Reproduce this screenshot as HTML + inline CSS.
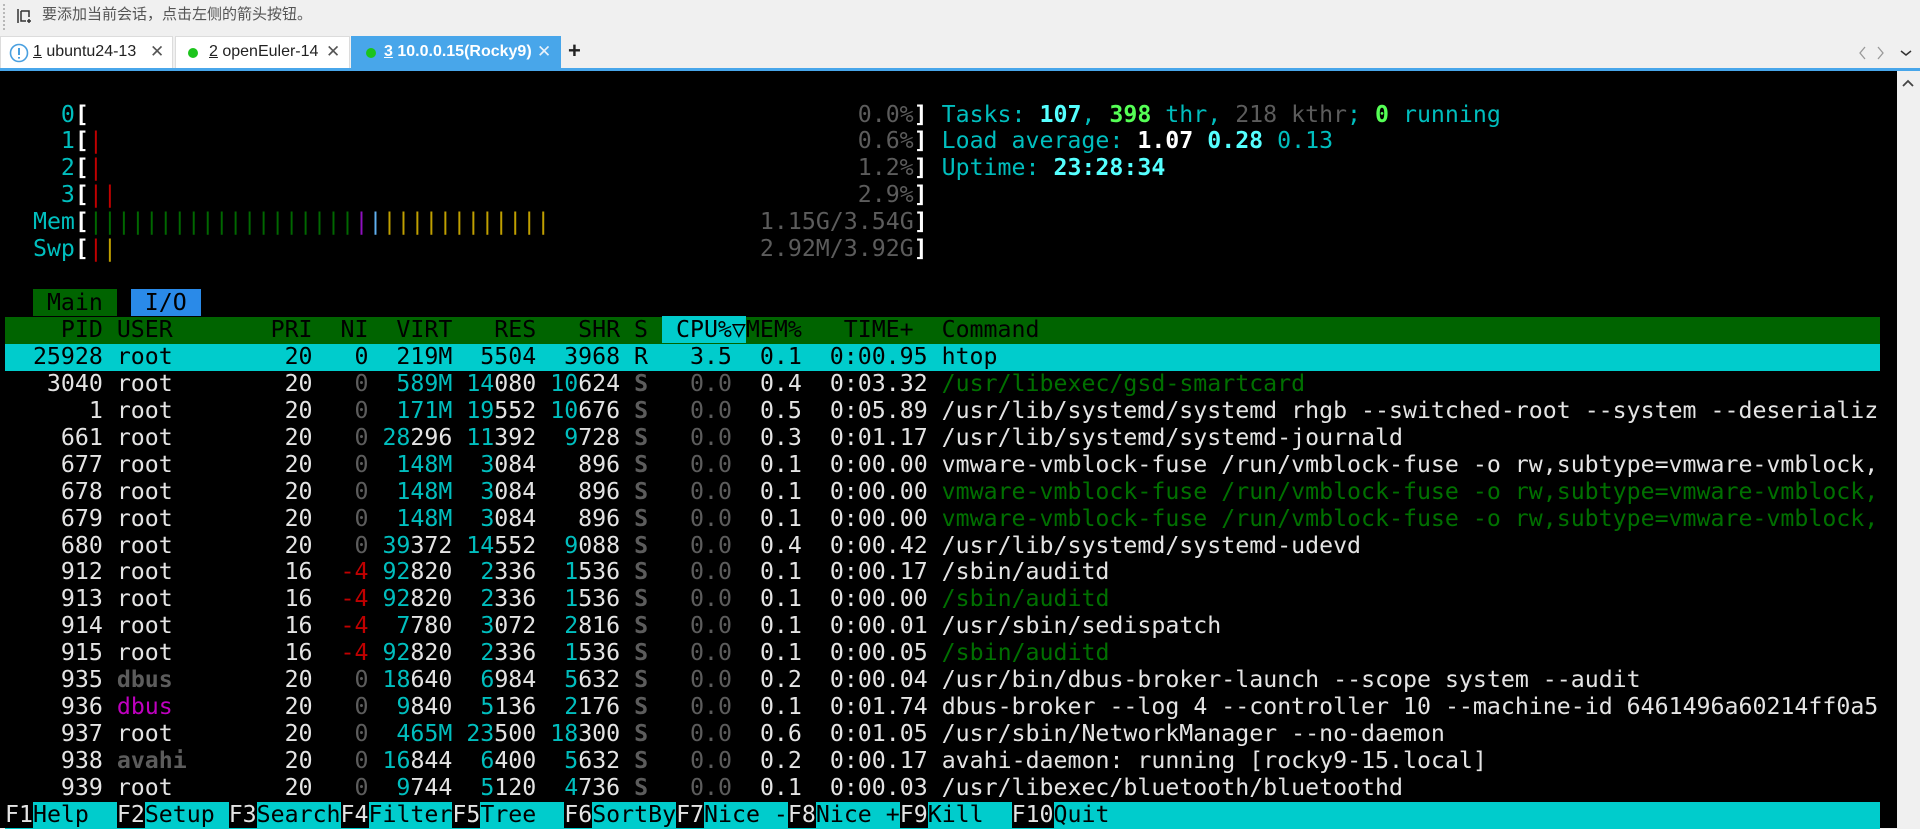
<!DOCTYPE html>
<html><head><meta charset="utf-8"><style>
*{margin:0;padding:0;box-sizing:border-box}
body{width:1920px;height:828px;overflow:hidden;background:#f0f0f0;position:relative;font-family:"Liberation Sans","Noto Sans CJK SC",sans-serif}
.tb{position:absolute;left:0;top:0;width:1920px;height:35px;background:#f0f0f0}
.tip{position:absolute;left:42px;top:5px;font-size:15px;color:#555;line-height:20px}
.grip{position:absolute;left:3px;top:4px;height:26px;border-left:2px dotted #b8b8b8}
.tab{position:absolute;top:36px;height:32px;background:#fff;border:1px solid #dcdcdc;border-bottom:none;font-size:16px;line-height:30px;color:#222}
.tab .x{position:absolute;top:0;font-size:17px;color:#555}
.tab.act{background:#48a6ea;border-color:#48a6ea;color:#fff;font-weight:bold}
.dot{position:absolute;top:11px;width:10px;height:10px;border-radius:50%;background:#1cc41c}
u{text-decoration:underline}
.line{position:absolute;left:0;top:68px;width:1920px;height:3px;background:#48a6ea}
.term{position:absolute;left:0;top:71px;width:1897px;height:757px;background:#000}
.sb{position:absolute;left:1897px;top:71px;width:23px;height:757px;background:#f0f0f0}
.scr{position:absolute;left:5px;top:101.5px;font-family:"DejaVu Sans Mono","Liberation Mono",monospace;font-size:23.22px;color:#e4e4e4}
.scr div{height:26.95px;line-height:26.95px;white-space:pre;width:1875px}
.c{color:#00bebe}.C{color:#55ffff;font-weight:bold}.g{color:#5c5c5c}.gB{color:#5c5c5c;font-weight:bold}.G{color:#007000}.r{color:#c00000}.m{color:#c000c0}
.W{color:#fff;font-weight:bold}.B{color:#55ff55;font-weight:bold}.y{color:#c0a000}.p{color:#9010c0}.b{color:#60b0f0}.gb{color:#006800}
.hd{background:#006400;color:#000}
.sel{background:#00cccc;color:#000}
.ft{background:#00cccc;color:#000}
.k{background:#000;color:#e4e4e4}
</style></head><body>
<div class="tb"><div class="grip"></div>
<svg style="position:absolute;left:16px;top:8px" width="16" height="16" viewBox="0 0 16 16"><path d="M2 1v14M5 3h8v6M5 3v10h5M13 11v4M11 13h4" stroke="#333" stroke-width="1.5" fill="none"/></svg>
<div class="tip">要添加当前会话，点击左侧的箭头按钮。</div></div>

<div class="tab" style="left:0;width:173px"><svg style="position:absolute;left:8px;top:6px" width="20" height="20" viewBox="0 0 20 20"><circle cx="10" cy="10" r="8.5" fill="none" stroke="#4aa0e0" stroke-width="1.6"/><path d="M10 5v7M10 14v1.6" stroke="#4aa0e0" stroke-width="2"/></svg><span style="position:absolute;left:32px"><u>1</u> ubuntu24-13</span><span class="x" style="left:149px">✕</span></div>
<div class="tab" style="left:175px;width:175px"><div class="dot" style="left:12px"></div><span style="position:absolute;left:33px"><u>2</u> openEuler-14</span><span class="x" style="left:150px">✕</span></div>
<div class="tab act" style="left:351px;width:210px"><div class="dot" style="left:14px"></div><span style="position:absolute;left:32px"><u>3</u> 10.0.0.15(Rocky9)</span><span class="x" style="left:185px;color:#e8f2fb;font-weight:normal">✕</span></div>
<div style="position:absolute;left:568px;top:36px;font-size:22px;line-height:30px;font-weight:bold;color:#222">+</div>
<svg style="position:absolute;left:1858px;top:46px" width="60" height="14" viewBox="0 0 60 14"><path d="M7 1L2 7l5 6M20 1l5 6-5 6" stroke="#999" stroke-width="1.3" fill="none"/><path d="M43 5l5 4 5-4" stroke="#333" stroke-width="1.5" fill="none"/></svg>
<div class="line"></div>
<div class="term"></div>
<div class="sb"><svg style="position:absolute;left:5px;top:8px" width="12" height="10" viewBox="0 0 12 10"><path d="M1 7l5-5 5 5" stroke="#444" stroke-width="1.8" fill="none"/></svg></div>

<div class="scr">
<div>    <span class="c">0</span><span class="W">[</span>                                                       <span class="g">0.0%</span><span class="W">]</span> <span class="c">Tasks: </span><span class="C">107</span><span class="c">, </span><span class="B">398</span><span class="c"> thr, </span><span class="g">218 kthr</span><span class="c">; </span><span class="B">0</span><span class="c"> running</span></div>
<div>    <span class="c">1</span><span class="W">[</span><span class="r">|</span>                                                      <span class="g">0.6%</span><span class="W">]</span> <span class="c">Load average: </span><span class="W">1.07</span> <span class="C">0.28</span> <span class="c">0.13</span></div>
<div>    <span class="c">2</span><span class="W">[</span><span class="r">|</span>                                                      <span class="g">1.2%</span><span class="W">]</span> <span class="c">Uptime: </span><span class="C">23:28:34</span></div>
<div>    <span class="c">3</span><span class="W">[</span><span class="r">||</span>                                                     <span class="g">2.9%</span><span class="W">]</span></div>
<div>  <span class="c">Mem</span><span class="W">[</span><span class="gb">|||||||||||||||||||</span><span class="p">|</span><span class="b">|</span><span class="y">||||||||||||</span>               <span class="g">1.15G/3.54G</span><span class="W">]</span></div>
<div>  <span class="c">Swp</span><span class="W">[</span><span class="r">|</span><span class="y">|</span>                                              <span class="g">2.92M/3.92G</span><span class="W">]</span></div>
<div> </div>
<div>  <span style="background:#006400;color:#000"> Main </span> <span style="background:#2a8ae8;color:#000"> I/O </span></div>
<div class="hd">    PID USER       PRI  NI  VIRT   RES   SHR S <span style="background:#00cccc"> CPU%▽</span>MEM%   TIME+  Command</div>
<div class="sel">  25928 root        20   0  219M  5504  3968 R   3.5  0.1  0:00.95 htop</div>
<div>   3040 root        20 <span class="g">  0</span> <span class="c"> 589M</span> <span class="c">14</span>080 <span class="c">10</span>624 <span class="gB">S</span> <span class="g">  0.0</span>  0.4  0:03.32 <span class="G">/usr/libexec/gsd-smartcard</span></div>
<div>      1 root        20 <span class="g">  0</span> <span class="c"> 171M</span> <span class="c">19</span>552 <span class="c">10</span>676 <span class="gB">S</span> <span class="g">  0.0</span>  0.5  0:05.89 /usr/lib/systemd/systemd rhgb --switched-root --system --deserializ</div>
<div>    661 root        20 <span class="g">  0</span> <span class="c">28</span>296 <span class="c">11</span>392  <span class="c">9</span>728 <span class="gB">S</span> <span class="g">  0.0</span>  0.3  0:01.17 /usr/lib/systemd/systemd-journald</div>
<div>    677 root        20 <span class="g">  0</span> <span class="c"> 148M</span>  <span class="c">3</span>084   896 <span class="gB">S</span> <span class="g">  0.0</span>  0.1  0:00.00 vmware-vmblock-fuse /run/vmblock-fuse -o rw,subtype=vmware-vmblock,</div>
<div>    678 root        20 <span class="g">  0</span> <span class="c"> 148M</span>  <span class="c">3</span>084   896 <span class="gB">S</span> <span class="g">  0.0</span>  0.1  0:00.00 <span class="G">vmware-vmblock-fuse /run/vmblock-fuse -o rw,subtype=vmware-vmblock,</span></div>
<div>    679 root        20 <span class="g">  0</span> <span class="c"> 148M</span>  <span class="c">3</span>084   896 <span class="gB">S</span> <span class="g">  0.0</span>  0.1  0:00.00 <span class="G">vmware-vmblock-fuse /run/vmblock-fuse -o rw,subtype=vmware-vmblock,</span></div>
<div>    680 root        20 <span class="g">  0</span> <span class="c">39</span>372 <span class="c">14</span>552  <span class="c">9</span>088 <span class="gB">S</span> <span class="g">  0.0</span>  0.4  0:00.42 /usr/lib/systemd/systemd-udevd</div>
<div>    912 root        16 <span class="r"> -4</span> <span class="c">92</span>820  <span class="c">2</span>336  <span class="c">1</span>536 <span class="gB">S</span> <span class="g">  0.0</span>  0.1  0:00.17 /sbin/auditd</div>
<div>    913 root        16 <span class="r"> -4</span> <span class="c">92</span>820  <span class="c">2</span>336  <span class="c">1</span>536 <span class="gB">S</span> <span class="g">  0.0</span>  0.1  0:00.00 <span class="G">/sbin/auditd</span></div>
<div>    914 root        16 <span class="r"> -4</span>  <span class="c">7</span>780  <span class="c">3</span>072  <span class="c">2</span>816 <span class="gB">S</span> <span class="g">  0.0</span>  0.1  0:00.01 /usr/sbin/sedispatch</div>
<div>    915 root        16 <span class="r"> -4</span> <span class="c">92</span>820  <span class="c">2</span>336  <span class="c">1</span>536 <span class="gB">S</span> <span class="g">  0.0</span>  0.1  0:00.05 <span class="G">/sbin/auditd</span></div>
<div>    935 <span class="gB">dbus</span>        20 <span class="g">  0</span> <span class="c">18</span>640  <span class="c">6</span>984  <span class="c">5</span>632 <span class="gB">S</span> <span class="g">  0.0</span>  0.2  0:00.04 /usr/bin/dbus-broker-launch --scope system --audit</div>
<div>    936 <span class="m">dbus</span>        20 <span class="g">  0</span>  <span class="c">9</span>840  <span class="c">5</span>136  <span class="c">2</span>176 <span class="gB">S</span> <span class="g">  0.0</span>  0.1  0:01.74 dbus-broker --log 4 --controller 10 --machine-id 6461496a60214ff0a5</div>
<div>    937 root        20 <span class="g">  0</span> <span class="c"> 465M</span> <span class="c">23</span>500 <span class="c">18</span>300 <span class="gB">S</span> <span class="g">  0.0</span>  0.6  0:01.05 /usr/sbin/NetworkManager --no-daemon</div>
<div>    938 <span class="gB">avahi</span>       20 <span class="g">  0</span> <span class="c">16</span>844  <span class="c">6</span>400  <span class="c">5</span>632 <span class="gB">S</span> <span class="g">  0.0</span>  0.2  0:00.17 avahi-daemon: running [rocky9-15.local]</div>
<div>    939 root        20 <span class="g">  0</span>  <span class="c">9</span>744  <span class="c">5</span>120  <span class="c">4</span>736 <span class="gB">S</span> <span class="g">  0.0</span>  0.1  0:00.03 /usr/libexec/bluetooth/bluetoothd</div>
<div class="ft"><span class="k">F1</span>Help  <span class="k">F2</span>Setup <span class="k">F3</span>Search<span class="k">F4</span>Filter<span class="k">F5</span>Tree  <span class="k">F6</span>SortBy<span class="k">F7</span>Nice -<span class="k">F8</span>Nice +<span class="k">F9</span>Kill  <span class="k">F10</span>Quit</div>
</div>
</body></html>
